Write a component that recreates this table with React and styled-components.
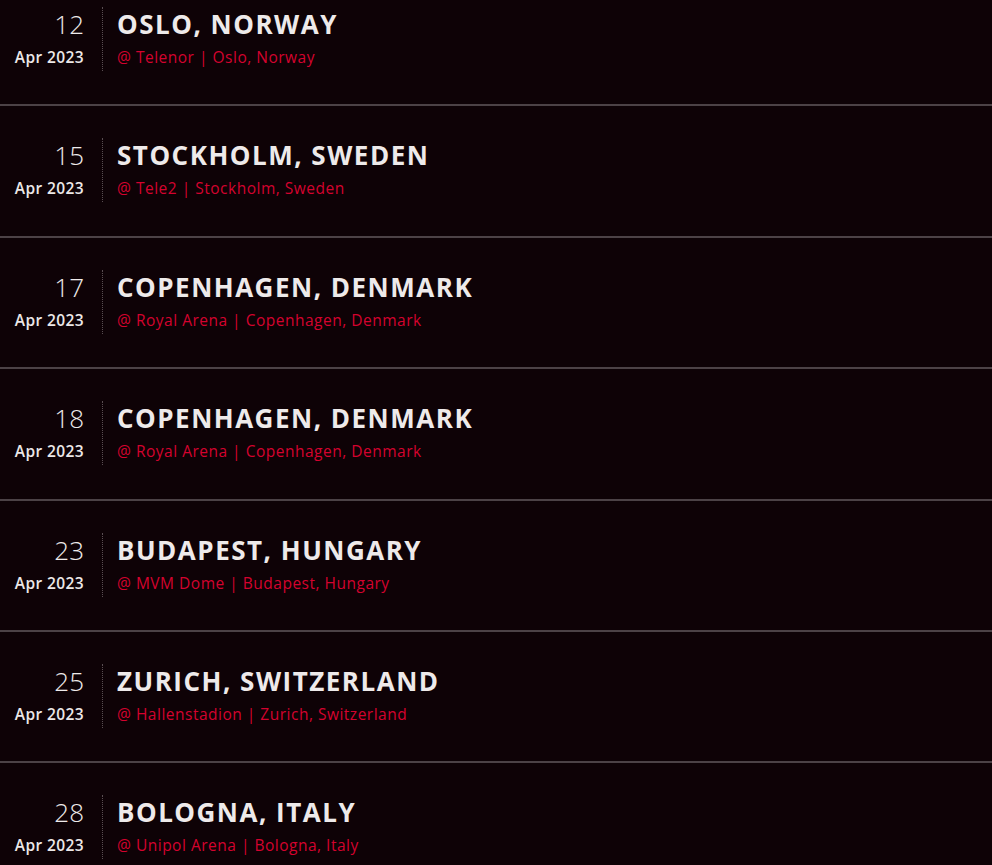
import React from 'react'
import styled, { createGlobalStyle } from 'styled-components'

const GlobalStyle = createGlobalStyle`
    html, body {
        margin: 0;
        padding: 0;
        background: #0e0206;
    }
    body {
        font-family: "Open Sans", "Liberation Sans", sans-serif;
        overflow: hidden;
    }
`;

const tours = [
    { day: '12', month: 'Apr 2023', city: 'OSLO, NORWAY', venue: 'Telenor', place: 'Oslo, Norway' },
    { day: '15', month: 'Apr 2023', city: 'STOCKHOLM, SWEDEN', venue: 'Tele2', place: 'Stockholm, Sweden' },
    { day: '17', month: 'Apr 2023', city: 'COPENHAGEN, DENMARK', venue: 'Royal Arena', place: 'Copenhagen, Denmark' },
    { day: '18', month: 'Apr 2023', city: 'COPENHAGEN, DENMARK', venue: 'Royal Arena', place: 'Copenhagen, Denmark' },
    { day: '23', month: 'Apr 2023', city: 'BUDAPEST, HUNGARY', venue: 'MVM Dome', place: 'Budapest, Hungary' },
    { day: '25', month: 'Apr 2023', city: 'ZURICH, SWITZERLAND', venue: 'Hallenstadion', place: 'Zurich, Switzerland' },
    { day: '28', month: 'Apr 2023', city: 'BOLOGNA, ITALY', venue: 'Unipol Arena', place: 'Bologna, Italy' },
];

const TourDates = () => {
  return (
    <TourStyled>
        <GlobalStyle />
        {tours.map((tour, i) => (
            <Row key={i}>
                <DateBox>
                    <span className="day">{tour.day}</span>
                    <span className="month">{tour.month}</span>
                </DateBox>
                <Info>
                    <h2>{tour.city}</h2>
                    <p>@ {tour.venue} | {tour.place}</p>
                </Info>
            </Row>
        ))}
    </TourStyled>
  )
}

const TourStyled = styled.div`
    width: 992px;
    height: 865px;
    overflow: hidden;
    background: #0e0206;
`;

const Row = styled.div`
    display: flex;
    align-items: stretch;
    padding: 32px 0 33.4px;
    border-bottom: 2px solid #4c4246;
    &:first-child{
        padding-top: 7px;
    }
`;

const DateBox = styled.div`
    width: 84px;
    padding-right: 18px;
    display: flex;
    flex-direction: column;
    align-items: flex-end;
    .day{
        font-size: 26px;
        font-weight: 300;
        line-height: 34px;
        color: #efebeb;
    }
    .month{
        margin-top: 6px;
        font-size: 15.5px;
        font-weight: 600;
        line-height: 20px;
        letter-spacing: 0.4px;
        color: #ece8e8;
    }
`;

const Info = styled.div`
    height: 64px;
    border-left: 1px dotted #5a4e52;
    padding-left: 14px;
    display: flex;
    flex-direction: column;
    h2{
        margin: 0;
        font-size: 26px;
        font-weight: 700;
        line-height: 34px;
        letter-spacing: 1.5px;
        color: #eeeaea;
    }
    p{
        margin: 6px 0 0;
        font-size: 15.5px;
        font-weight: 400;
        line-height: 20px;
        letter-spacing: 0.5px;
        color: #d4022e;
    }
`;

export default TourDates
